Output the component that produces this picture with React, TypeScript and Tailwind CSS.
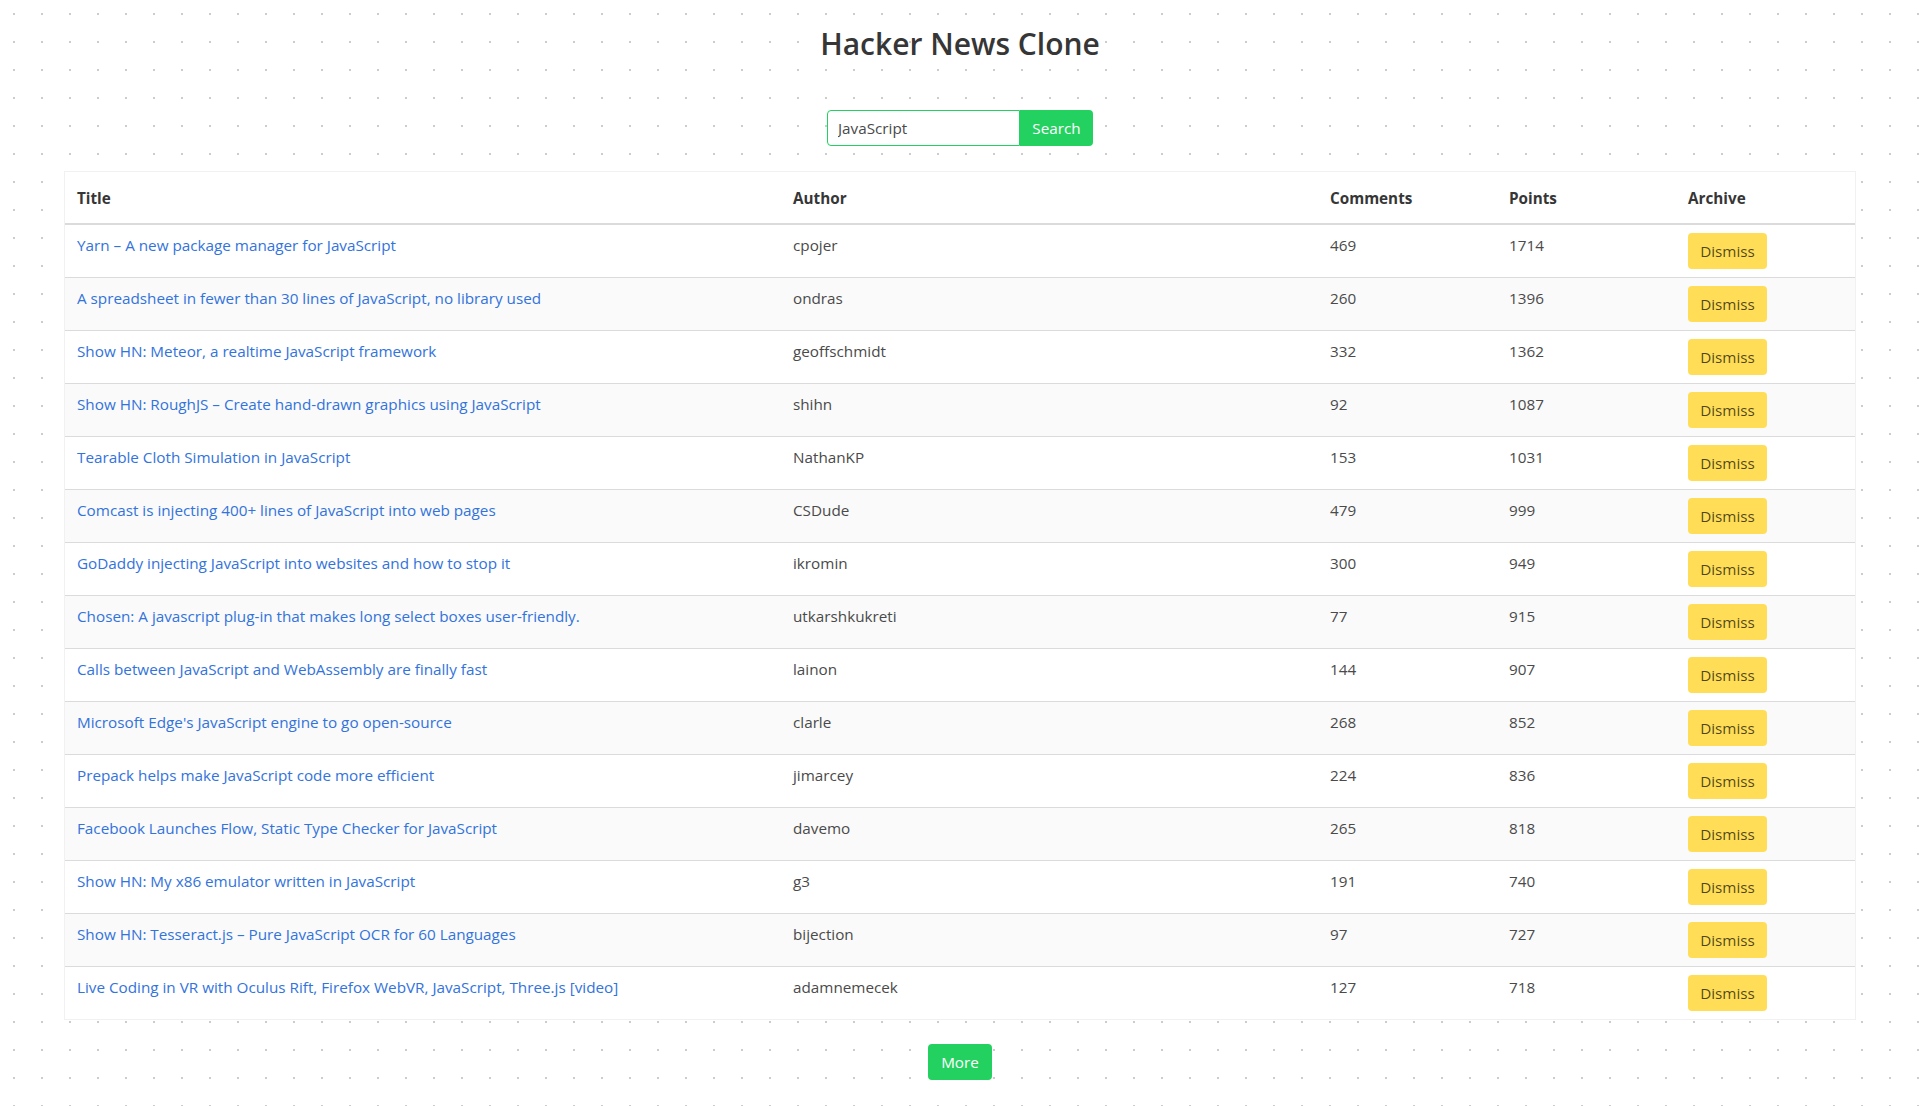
const stories = [
  { title: 'Yarn – A new package manager for JavaScript', author: 'cpojer', comments: 469, points: 1714 },
  { title: 'A spreadsheet in fewer than 30 lines of JavaScript, no library used', author: 'ondras', comments: 260, points: 1396 },
  { title: 'Show HN: Meteor, a realtime JavaScript framework', author: 'geoffschmidt', comments: 332, points: 1362 },
  { title: 'Show HN: RoughJS – Create hand-drawn graphics using JavaScript', author: 'shihn', comments: 92, points: 1087 },
  { title: 'Tearable Cloth Simulation in JavaScript', author: 'NathanKP', comments: 153, points: 1031 },
  { title: 'Comcast is injecting 400+ lines of JavaScript into web pages', author: 'CSDude', comments: 479, points: 999 },
  { title: 'GoDaddy injecting JavaScript into websites and how to stop it', author: 'ikromin', comments: 300, points: 949 },
  { title: 'Chosen: A javascript plug-in that makes long select boxes user-friendly.', author: 'utkarshkukreti', comments: 77, points: 915 },
  { title: 'Calls between JavaScript and WebAssembly are finally fast', author: 'lainon', comments: 144, points: 907 },
  { title: "Microsoft Edge's JavaScript engine to go open-source", author: 'clarle', comments: 268, points: 852 },
  { title: 'Prepack helps make JavaScript code more efficient', author: 'jimarcey', comments: 224, points: 836 },
  { title: 'Facebook Launches Flow, Static Type Checker for JavaScript', author: 'davemo', comments: 265, points: 818 },
  { title: 'Show HN: My x86 emulator written in JavaScript', author: 'g3', comments: 191, points: 740 },
  { title: 'Show HN: Tesseract.js – Pure JavaScript OCR for 60 Languages', author: 'bijection', comments: 97, points: 727 },
  { title: 'Live Coding in VR with Oculus Rift, Firefox WebVR, JavaScript, Three.js [video]', author: 'adamnemecek', comments: 127, points: 718 },
];

export default function App() {
  return (
    <div className="min-h-screen bg-white bg-[radial-gradient(circle,#cccccc_1px,transparent_1.5px)] bg-[size:28px_28px] font-['Open_Sans',sans-serif] text-[15.25px] leading-6 text-[#4a4a4a]">
      <div className="px-16 pt-6 pb-6">
        <h1 className="text-center text-[30px] font-semibold leading-10 text-[#363636]">Hacker News Clone</h1>

        <form className="mt-[46px] flex justify-center" onSubmit={(e) => e.preventDefault()}>
          <input
            defaultValue="JavaScript"
            className="h-9 w-[193px] rounded-l border border-[#23d160] bg-white pl-[10px] text-[15.25px] text-[#4a4a4a] outline-none"
          />
          <button className="h-9 w-[73px] rounded-r bg-[#23d160] text-[15.25px] text-white">Search</button>
        </form>

        <div className="mt-[25px] border border-[#f1f1f1] bg-white">
          <table className="w-full table-fixed border-collapse">
            <colgroup>
              <col className="w-[40%]" />
              <col className="w-[30%]" />
              <col className="w-[10%]" />
              <col className="w-[10%]" />
              <col className="w-[10%]" />
            </colgroup>
            <thead>
              <tr className="border-b-2 border-[#dbdbdb] text-left text-[#363636]">
                <th className="px-3 pt-[14px] pb-[13px] font-bold">Title</th>
                <th className="px-3 pt-[14px] pb-[13px] font-bold">Author</th>
                <th className="px-3 pt-[14px] pb-[13px] font-bold">Comments</th>
                <th className="px-3 pt-[14px] pb-[13px] font-bold">Points</th>
                <th className="px-3 pt-[14px] pb-[13px] font-bold">Archive</th>
              </tr>
            </thead>
            <tbody>
              {stories.map((s, i) => (
                <tr
                  key={s.title}
                  className={`${i % 2 === 1 ? 'bg-[#fafafa]' : 'bg-white'} ${i < stories.length - 1 ? 'border-b border-[#dbdbdb]' : ''}`}
                >
                  <td className="px-3 py-2 align-top">
                    <a href="#" className="text-[#3273dc]">{s.title}</a>
                  </td>
                  <td className="px-3 py-2 align-top">{s.author}</td>
                  <td className="px-3 py-2 align-top">{s.comments}</td>
                  <td className="px-3 py-2 align-top">{s.points}</td>
                  <td className="px-3 py-2 align-top">
                    <button className="h-9 w-[79px] rounded bg-[#ffdd57] text-[15.25px] text-black/70">Dismiss</button>
                  </td>
                </tr>
              ))}
            </tbody>
          </table>
        </div>

        <div className="mt-6 flex justify-center">
          <button className="h-9 w-16 rounded bg-[#23d160] text-[15.25px] text-white">More</button>
        </div>
      </div>
    </div>
  );
}
